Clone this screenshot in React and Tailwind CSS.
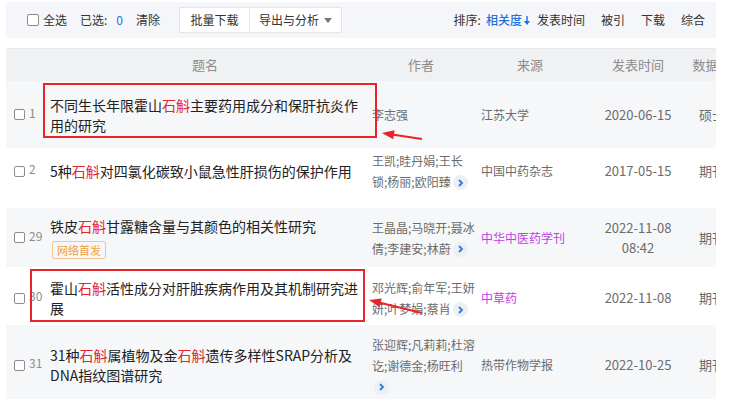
import React from 'react'

const Hl = ({ children }) => <span className="text-[#e3262c]">{children}</span>

const Box = ({ big }) => (
    <span
        className={
            big
                ? 'inline-block w-[12px] h-[12px] border border-[#8c8c8c] rounded-[2px] bg-white'
                : 'inline-block w-[11px] h-[11px] border border-[#8c8c8c] rounded-[2px] bg-white'
        }
    />
)

const More = () => (
    <span className="inline-flex items-center justify-center w-[15px] h-[15px] rounded-full bg-[#eceff3] align-middle ml-[2px] -mt-[2px]">
        <svg width="7" height="8" viewBox="0 0 7 8">
            <path d="M2 1l3 3-3 3" stroke="#2f7bd8" strokeWidth="1.8" fill="none" />
        </svg>
    </span>
)

const rows = [
    {
        num: '1',
        cls: 'flex items-center h-[67px] bg-[#f6f7f9]',
        title: (
            <>
                不同生长年限霍山<Hl>石斛</Hl>主要药用成分和保肝抗炎作
                <br />
                用的研究
            </>
        ),
        authors: <>李志强</>,
        source: '江苏大学',
        date: ['2020-06-15'],
        type: '硕士',
    },
    {
        num: '2',
        cls: 'flex items-center h-[60px] pb-[14px] bg-white',
        title: (
            <>
                5种<Hl>石斛</Hl>对四氯化碳致小鼠急性肝损伤的保护作用
            </>
        ),
        authors: (
            <>
                王凯;眭丹娟;王长
                <br />
                锁;杨丽;欧阳臻
                <More />
            </>
        ),
        source: '中国中药杂志',
        date: ['2017-05-15'],
        type: '期刊',
    },
    {
        num: '29',
        cls: 'flex items-center h-[59px] bg-[#f6f7f9]',
        title: (
            <>
                铁皮<Hl>石斛</Hl>甘露糖含量与其颜色的相关性研究
            </>
        ),
        badge: true,
        authors: (
            <>
                王晶晶;马晓开;聂冰
                <br />
                倩;李建安;林蔚
                <More />
            </>
        ),
        source: '中华中医药学刊',
        purple: true,
        date: ['2022-11-08', '08:42'],
        type: '期刊',
    },
    {
        num: '30',
        cls: 'flex items-center h-[58px] pt-[4px] bg-white',
        title: (
            <>
                霍山<Hl>石斛</Hl>活性成分对肝脏疾病作用及其机制研究进
                <br />
                展
            </>
        ),
        authors: (
            <>
                邓光辉;俞年军;王妍
                <br />
                妍;叶梦娟;蔡肖
                <More />
            </>
        ),
        source: '中草药',
        purple: true,
        date: ['2022-11-08'],
        type: '期刊',
    },
    {
        num: '31',
        cls: 'flex items-center h-[80px] bg-[#f6f7f9]',
        title: (
            <>
                31种<Hl>石斛</Hl>属植物及金<Hl>石斛</Hl>遗传多样性SRAP分析及
                <br />
                DNA指纹图谱研究
            </>
        ),
        authors: (
            <>
                张迎辉;凡莉莉;杜溶
                <br />
                讫;谢德金;杨旺利
                <br />
                <More />
            </>
        ),
        source: '热带作物学报',
        date: ['2022-10-25'],
        type: '期刊',
    },
]

export default function App() {
    return (
        <div
            className="relative w-[730px] h-[399px] bg-white overflow-hidden"
            style={{ fontFamily: '"Noto Sans CJK SC", "Noto Sans", sans-serif' }}
        >
            <div className="ml-[6px] w-[710px] overflow-hidden">
                {/* Toolbar */}
                <div className="mt-[2px] h-[36px] bg-[#f4f6f9] flex items-center pl-[21px] pr-[11px] text-[12px] text-[#333]">
                    <Box big />
                    <span className="ml-[4px]">全选</span>
                    <span className="ml-[13px]">已选:</span>
                    <span className="ml-[9px] text-[#1f6fe0]">0</span>
                    <span className="ml-[13px]">清除</span>
                    <div className="ml-[19px] flex h-[26px]">
                        <div className="w-[71px] flex items-center justify-center bg-white border border-[#e3e5e8]">
                            批量下载
                        </div>
                        <div className="w-[92px] flex items-center justify-center gap-[5px] bg-white border border-l-0 border-[#e3e5e8]">
                            导出与分析
                            <svg width="8" height="5" viewBox="0 0 8 5">
                                <path d="M0 0L8 0L4 5Z" fill="#777" />
                            </svg>
                        </div>
                    </div>
                    <div className="ml-auto flex items-center">
                        <span>排序:</span>
                        <span className="ml-[5px] flex items-center text-[#1f6fe0] font-medium">
                            相关度
                            <svg width="8" height="11" viewBox="0 0 8 11" className="ml-[1px]">
                                <path d="M4 1V8" stroke="#1f6fe0" strokeWidth="1.4" />
                                <path d="M1 6L4 10L7 6Z" fill="#1f6fe0" />
                            </svg>
                        </span>
                        <span className="ml-[6px]">发表时间</span>
                        <span className="ml-[16px]">被引</span>
                        <span className="ml-[16px]">下载</span>
                        <span className="ml-[16px]">综合</span>
                    </div>
                </div>

                {/* Header */}
                <div className="mt-[10px] h-[33px] flex items-center bg-[#f0f1f3] border-t border-[#e6e8eb] text-[13px] text-[#8c8c8c] whitespace-nowrap">
                    <div className="w-[37px] shrink-0" />
                    <div className="w-[324px] shrink-0 text-center">题名</div>
                    <div className="w-[108px] shrink-0 text-center">作者</div>
                    <div className="w-[110px] shrink-0 text-center">来源</div>
                    <div className="w-[106px] shrink-0 text-center">发表时间</div>
                    <div className="w-[42px] shrink-0 text-center">数据库</div>
                </div>

                {/* Rows */}
                {rows.map((r) => (
                    <div key={r.num} className={r.cls}>
                        <div className="w-[37px] shrink-0 flex items-center pl-[8px]">
                            <Box />
                            <span className="ml-[4px] -mt-[4px] text-[12px] text-[#8c8c8c]">{r.num}</span>
                        </div>
                        <div className="w-[324px] shrink-0 pl-[7px]">
                            <div className="text-[14px] leading-[20px] text-[#222] whitespace-nowrap">{r.title}</div>
                            {r.badge && (
                                <span className="inline-block mt-[2px] ml-[2px] px-[4px] h-[18px] leading-[16px] text-[11px] text-[#f0a040] border border-[#f3c48f] rounded-[2px]">
                                    网络首发
                                </span>
                            )}
                        </div>
                        <div className="w-[108px] shrink-0 pl-[5px] text-[12px] leading-[21px] text-[#6b6b6b] whitespace-nowrap">
                            {r.authors}
                        </div>
                        <div
                            className={
                                r.purple
                                    ? 'w-[110px] shrink-0 pl-[6px] text-[12px] text-[#c03ee8] whitespace-nowrap'
                                    : 'w-[110px] shrink-0 pl-[6px] text-[12px] text-[#6b6b6b] whitespace-nowrap'
                            }
                        >
                            {r.source}
                        </div>
                        <div className="w-[106px] shrink-0 text-center text-[13px] leading-[20px] text-[#6b6b6b]">
                            {r.date.map((d) => (
                                <div key={d}>{d}</div>
                            ))}
                        </div>
                        <div className="w-[42px] shrink-0 text-center text-[13px] text-[#6b6b6b]">{r.type}</div>
                    </div>
                ))}
            </div>

            {/* Annotations */}
            <svg className="absolute left-0 top-0 pointer-events-none" width="730" height="399">
                <rect x="44" y="84" width="332" height="53" fill="none" stroke="#e8232a" strokeWidth="2" />
                <rect x="31" y="270" width="333" height="51" fill="none" stroke="#e8232a" strokeWidth="2" />
                <path d="M422 139L392 134.5" stroke="#e8232a" strokeWidth="2" />
                <polygon points="382,133 394.6,130.3 393.2,139.2" fill="#e8232a" />
                <path d="M422 313L379 302.5" stroke="#e8232a" strokeWidth="2" />
                <polygon points="369,300 381.7,298.5 379.6,307.2" fill="#e8232a" />
            </svg>
        </div>
    )
}
